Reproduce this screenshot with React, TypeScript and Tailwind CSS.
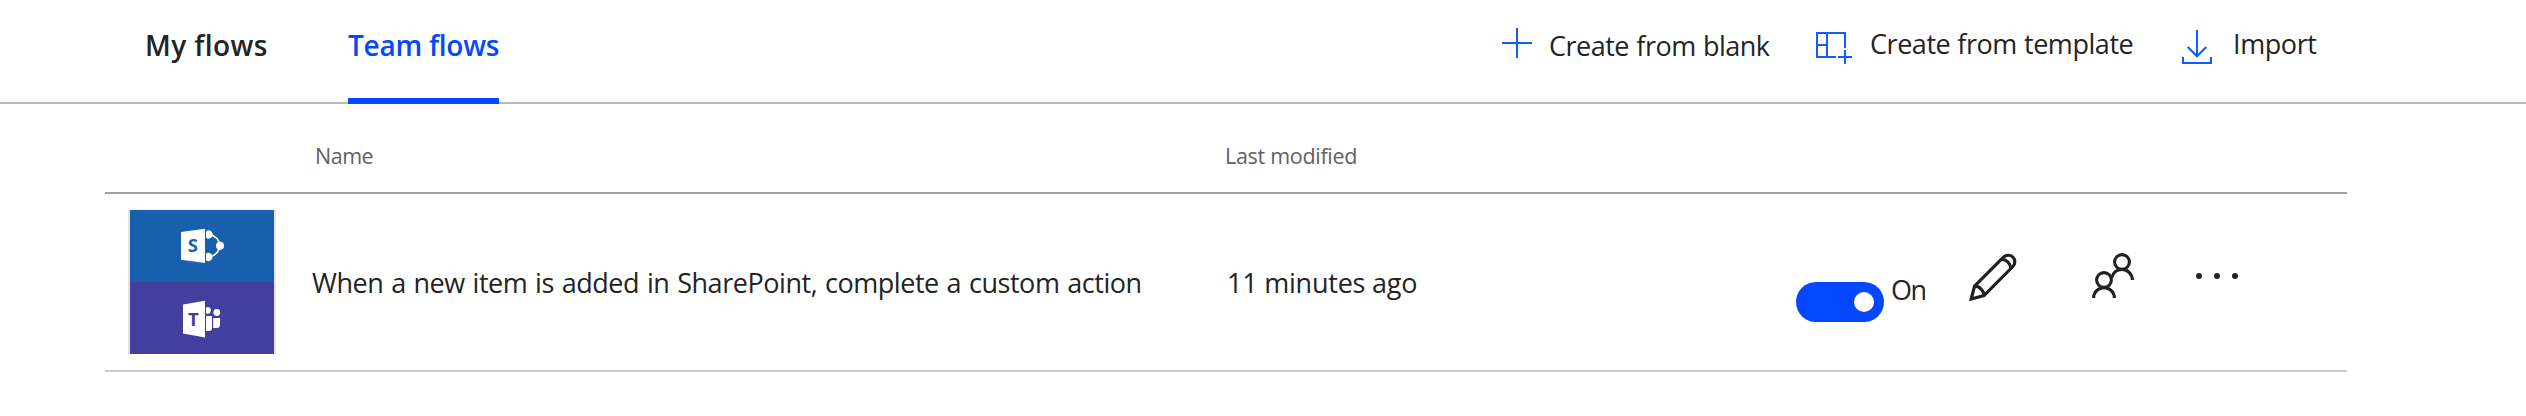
import React from "react";

function PlusIcon() {
  return (
    <svg className="mt-7 h-[30px] w-[30px] shrink-0" viewBox="0 0 30 30" stroke="#0f5bff" strokeWidth="2" fill="none">
      <path d="M15 0V30M0 15H30" />
    </svg>
  );
}

function TemplateIcon() {
  return (
    <svg className="mt-8 h-8 w-9 shrink-0" viewBox="0 0 36 32" stroke="#0f5bff" strokeWidth="2" fill="none">
      <path d="M29 16V1H1V25H20M11 1V25M1 13H11M29 18V32M22 25H36" />
    </svg>
  );
}

function ImportIcon() {
  return (
    <svg className="mt-[30px] h-[34px] w-[30px] shrink-0" viewBox="0 0 30 34" stroke="#0f5bff" strokeWidth="2" fill="none">
      <path d="M15 0V26M5.7 17L15 26.3L24.3 17M1 27V33H29V27" />
    </svg>
  );
}

function SharePointLogo() {
  return (
    <svg className="h-[72px] w-[144px]" viewBox="0 0 144 72">
      <path d="M51 22L75 18.7V53L51 49.7Z" fill="#fff" />
      <path d="M79 24.5C85 25.5 89 30 90 35.7C89 41.5 85 46 79 47" fill="none" stroke="#fff" strokeWidth="1.6" />
      <path d="M76 21.5A4 4 0 1 1 76 27.5ZM76 43.8A4 4 0 1 1 76 50.2Z" fill="#fff" />
      <circle cx="90" cy="35.7" r="4" fill="#fff" />
      <text x="62.8" y="42.3" textAnchor="middle" fontFamily="Open Sans, sans-serif" fontWeight="700" fontSize="18.5" fill="#185fae">S</text>
    </svg>
  );
}

function TeamsLogo() {
  return (
    <svg className="h-[72px] w-[144px]" viewBox="0 0 144 72">
      <path d="M53 22.5L75 18.7V55.5L53 51.5Z" fill="#fff" />
      <path d="M76 25.6A3.3 3.3 0 1 1 76 31.2ZM76 34H82V46Q82 49 79 49H76Z" fill="#fff" />
      <circle cx="86.8" cy="30.5" r="3.4" fill="#fff" />
      <path d="M83.2 36H90V42.5Q90 46 86.5 46H83.2Z" fill="#fff" />
      <text x="63.3" y="43.6" textAnchor="middle" fontFamily="Open Sans, sans-serif" fontWeight="700" fontSize="18.5" fill="#423f9e">T</text>
    </svg>
  );
}

function PencilIcon() {
  return (
    <svg className="h-12 w-12 shrink-0" viewBox="0 0 48 48" fill="none" stroke="#212121" strokeWidth="3.2">
      <path d="M2.2 46L5.6 33.2L34.5 4.2A6.4 6.4 0 0 1 43.9 13.5L15 42.6Z" />
      <path d="M5.6 33.2C10.5 33.2 15 37.7 15 42.6M32.5 6.2C37.5 6.5 41.6 10.7 41.9 15.6" />
    </svg>
  );
}

function PeopleIcon() {
  return (
    <svg className="h-[45px] w-[42px] shrink-0" viewBox="0 0 42 45" fill="none" stroke="#212121" strokeWidth="3.1">
      <circle cx="30" cy="9" r="7.4" />
      <circle cx="12" cy="27" r="7.4" />
      <path d="M1.6 45A10.4 10.4 0 0 1 22.4 45M20 24.5C21 19.5 25 16.4 30 16.4A10.6 10.6 0 0 1 40.4 27" />
    </svg>
  );
}

export default function App() {
  return (
    <div className="h-[416px] w-full overflow-hidden bg-white font-['Open_Sans',sans-serif] text-[27px] text-[#242424]">
      <header className="flex h-[104px] items-start whitespace-nowrap border-b-2 border-[#bababa]">
        <nav className="flex pl-[145px] text-[28px] font-semibold leading-[90px]">
          <a className="w-[203px] tracking-[0.4px]">My flows</a>
          <a className="h-[104px] w-[151px] border-b-6 border-[#0548ff] tracking-[-0.25px] text-[#0548ff]">Team flows</a>
        </nav>
        <div className="flex pl-[1003px]">
          <button className="flex w-[314px] items-start">
            <PlusIcon />
            <span className="ml-[17px] leading-[91px] tracking-[-0.5px] [word-spacing:0.8px]">Create from blank</span>
          </button>
          <button className="flex w-[366px] items-start">
            <TemplateIcon />
            <span className="ml-[18px] leading-[87px] tracking-[-0.45px] [word-spacing:0.5px]">Create from template</span>
          </button>
          <button className="flex items-start">
            <ImportIcon />
            <span className="ml-[21px] leading-[87px] tracking-[-0.4px]">Import</span>
          </button>
        </div>
      </header>

      <main className="ml-[105px] w-[2242px] whitespace-nowrap">
        <div className="flex h-[90px] border-b-2 border-[#a0a0a0] text-[21.5px] leading-[104px] text-[#616161]">
          <div className="w-[909px] pl-[210px] tracking-[-0.5px]">Name</div>
          <div className="pl-[211px] tracking-[-0.3px]">Last modified</div>
        </div>
        <div className="flex h-[178px] items-start border-b-2 border-[#cacaca]">
          <div className="ml-[23px] mt-4 w-[148px] border-x-2 border-[#e4e4e4]">
            <div className="h-[72px] bg-[#185fae]"><SharePointLogo /></div>
            <div className="h-[72px] bg-[#423f9e]"><TeamsLogo /></div>
          </div>
          <div className="w-[951px] pl-9 leading-[178px] tracking-[-0.45px] [word-spacing:1.2px]">When a new item is added in SharePoint, complete a custom action</div>
          <div className="w-[569px] leading-[178px] tracking-[-0.22px]">11 minutes ago</div>
          <div className="mt-[88px] flex h-10 w-[88px] shrink-0 items-center justify-end rounded-full bg-[#0548ff] pr-[10px]">
            <span className="h-5 w-5 rounded-full bg-white" />
          </div>
          <span className="ml-[7px] w-[78px] leading-[192px] tracking-[-1.4px]">On</span>
          <div className="mt-[59px] flex">
            <PencilIcon />
            <div className="ml-[75px]"><PeopleIcon /></div>
            <svg className="ml-[62px] mt-5 h-[6px] w-[42px]" viewBox="0 0 42 6" fill="#212121">
              <circle cx="3" cy="3" r="3" />
              <circle cx="21" cy="3" r="3" />
              <circle cx="39" cy="3" r="3" />
            </svg>
          </div>
        </div>
      </main>
    </div>
  );
}
